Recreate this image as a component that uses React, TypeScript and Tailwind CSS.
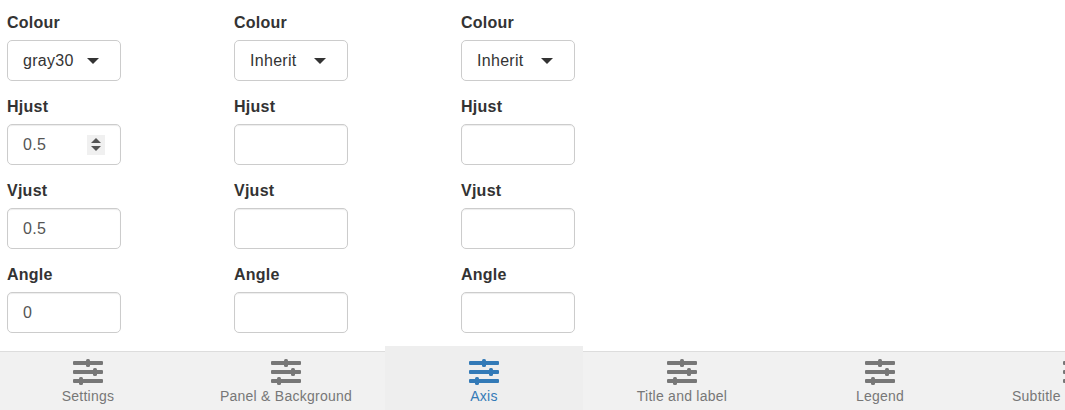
import React from "react";

const fields = ["Colour", "Hjust", "Vjust", "Angle"];
const tabs = ["Settings", "Panel & Background", "Axis", "Title and label", "Legend", "Subtitle"];

const columns = [
  { Colour: "gray30", Hjust: "0.5", Vjust: "0.5", Angle: "0", spin: true },
  { Colour: "Inherit", Hjust: "", Vjust: "", Angle: "", spin: false },
  { Colour: "Inherit", Hjust: "", Vjust: "", Angle: "", spin: false },
];

function SlidersGlyph() {
  return (
    <svg width="30" height="26" viewBox="0 0 30 26" className="fill-current">
      <rect x="0" y="2" width="30" height="4" rx="1" />
      <rect x="13" y="0" width="4" height="8" rx="1.5" />
      <rect x="0" y="11" width="30" height="4" rx="1" />
      <rect x="20" y="9" width="4" height="8" rx="1.5" />
      <rect x="0" y="20" width="30" height="4" rx="1" />
      <rect x="6" y="18" width="4" height="8" rx="1.5" />
    </svg>
  );
}

function Spinner() {
  return (
    <div className="w-[18px] h-[20px] bg-[#f0f0f0] flex flex-col items-center justify-center gap-[3px]">
      <div className="w-0 h-0 border-x-[5px] border-x-transparent border-b-[5px] border-b-[#555]" />
      <div className="w-0 h-0 border-x-[5px] border-x-transparent border-t-[5px] border-t-[#555]" />
    </div>
  );
}

function Field({ label, value, select, spin }: { label: string; value: string; select?: boolean; spin?: boolean }) {
  return (
    <div className="h-[84px] pt-[13px]">
      <div className="h-[20px] mb-[7px] text-[16px] leading-[20px] font-bold tracking-[0.25px] text-[#333]">{label}</div>
      <div
        className={`w-[114px] h-[41px] flex items-center justify-between pl-[15px] border border-[#ccc] rounded-[5px] text-[16px] tracking-[0.3px] bg-white ${
          select ? "pr-[21px] text-[#333]" : "pr-[15px] text-[#555] shadow-[inset_0_1px_1px_rgba(0,0,0,0.075)]"
        }`}
      >
        <span>{value}</span>
        {select && <div className="w-0 h-0 border-x-[6px] border-x-transparent border-t-[6px] border-t-[#333]" />}
        {spin && <Spinner />}
      </div>
    </div>
  );
}

export default function App() {
  return (
    <div className="w-[1065px] h-[410px] overflow-hidden flex flex-col bg-white font-['Liberation_Sans',Arial,sans-serif]">
      <div className="h-[351px] flex gap-[113px] pl-[7px]">
        {columns.map((col, i) => (
          <div key={i} className="w-[114px]">
            {fields.map((f) => (
              <Field
                key={f}
                label={f}
                value={col[f as "Colour"]}
                select={f === "Colour"}
                spin={col.spin && f === "Hjust"}
              />
            ))}
          </div>
        ))}
      </div>
      <div className="h-[59px] flex border-t border-[#ddd] bg-[#f1f1f1] -ml-[11px] w-[1300px] shrink-0">
        {tabs.map((t) => {
          const active = t === "Axis";
          return (
            <div
              key={t}
              className={`w-[198px] shrink-0 flex flex-col items-center text-[14px] leading-[16px] tracking-[0.25px] ${
                active ? "bg-[#eee] text-[#337ab7] -mt-[6px] h-[65px] pt-[13px]" : "text-[#777] pt-[7px]"
              }`}
            >
              <SlidersGlyph />
              <span className={t === "Subtitle" ? "mt-[3px] self-start ml-[33px]" : "mt-[3px]"}>{t}</span>
            </div>
          );
        })}
      </div>
    </div>
  );
}
